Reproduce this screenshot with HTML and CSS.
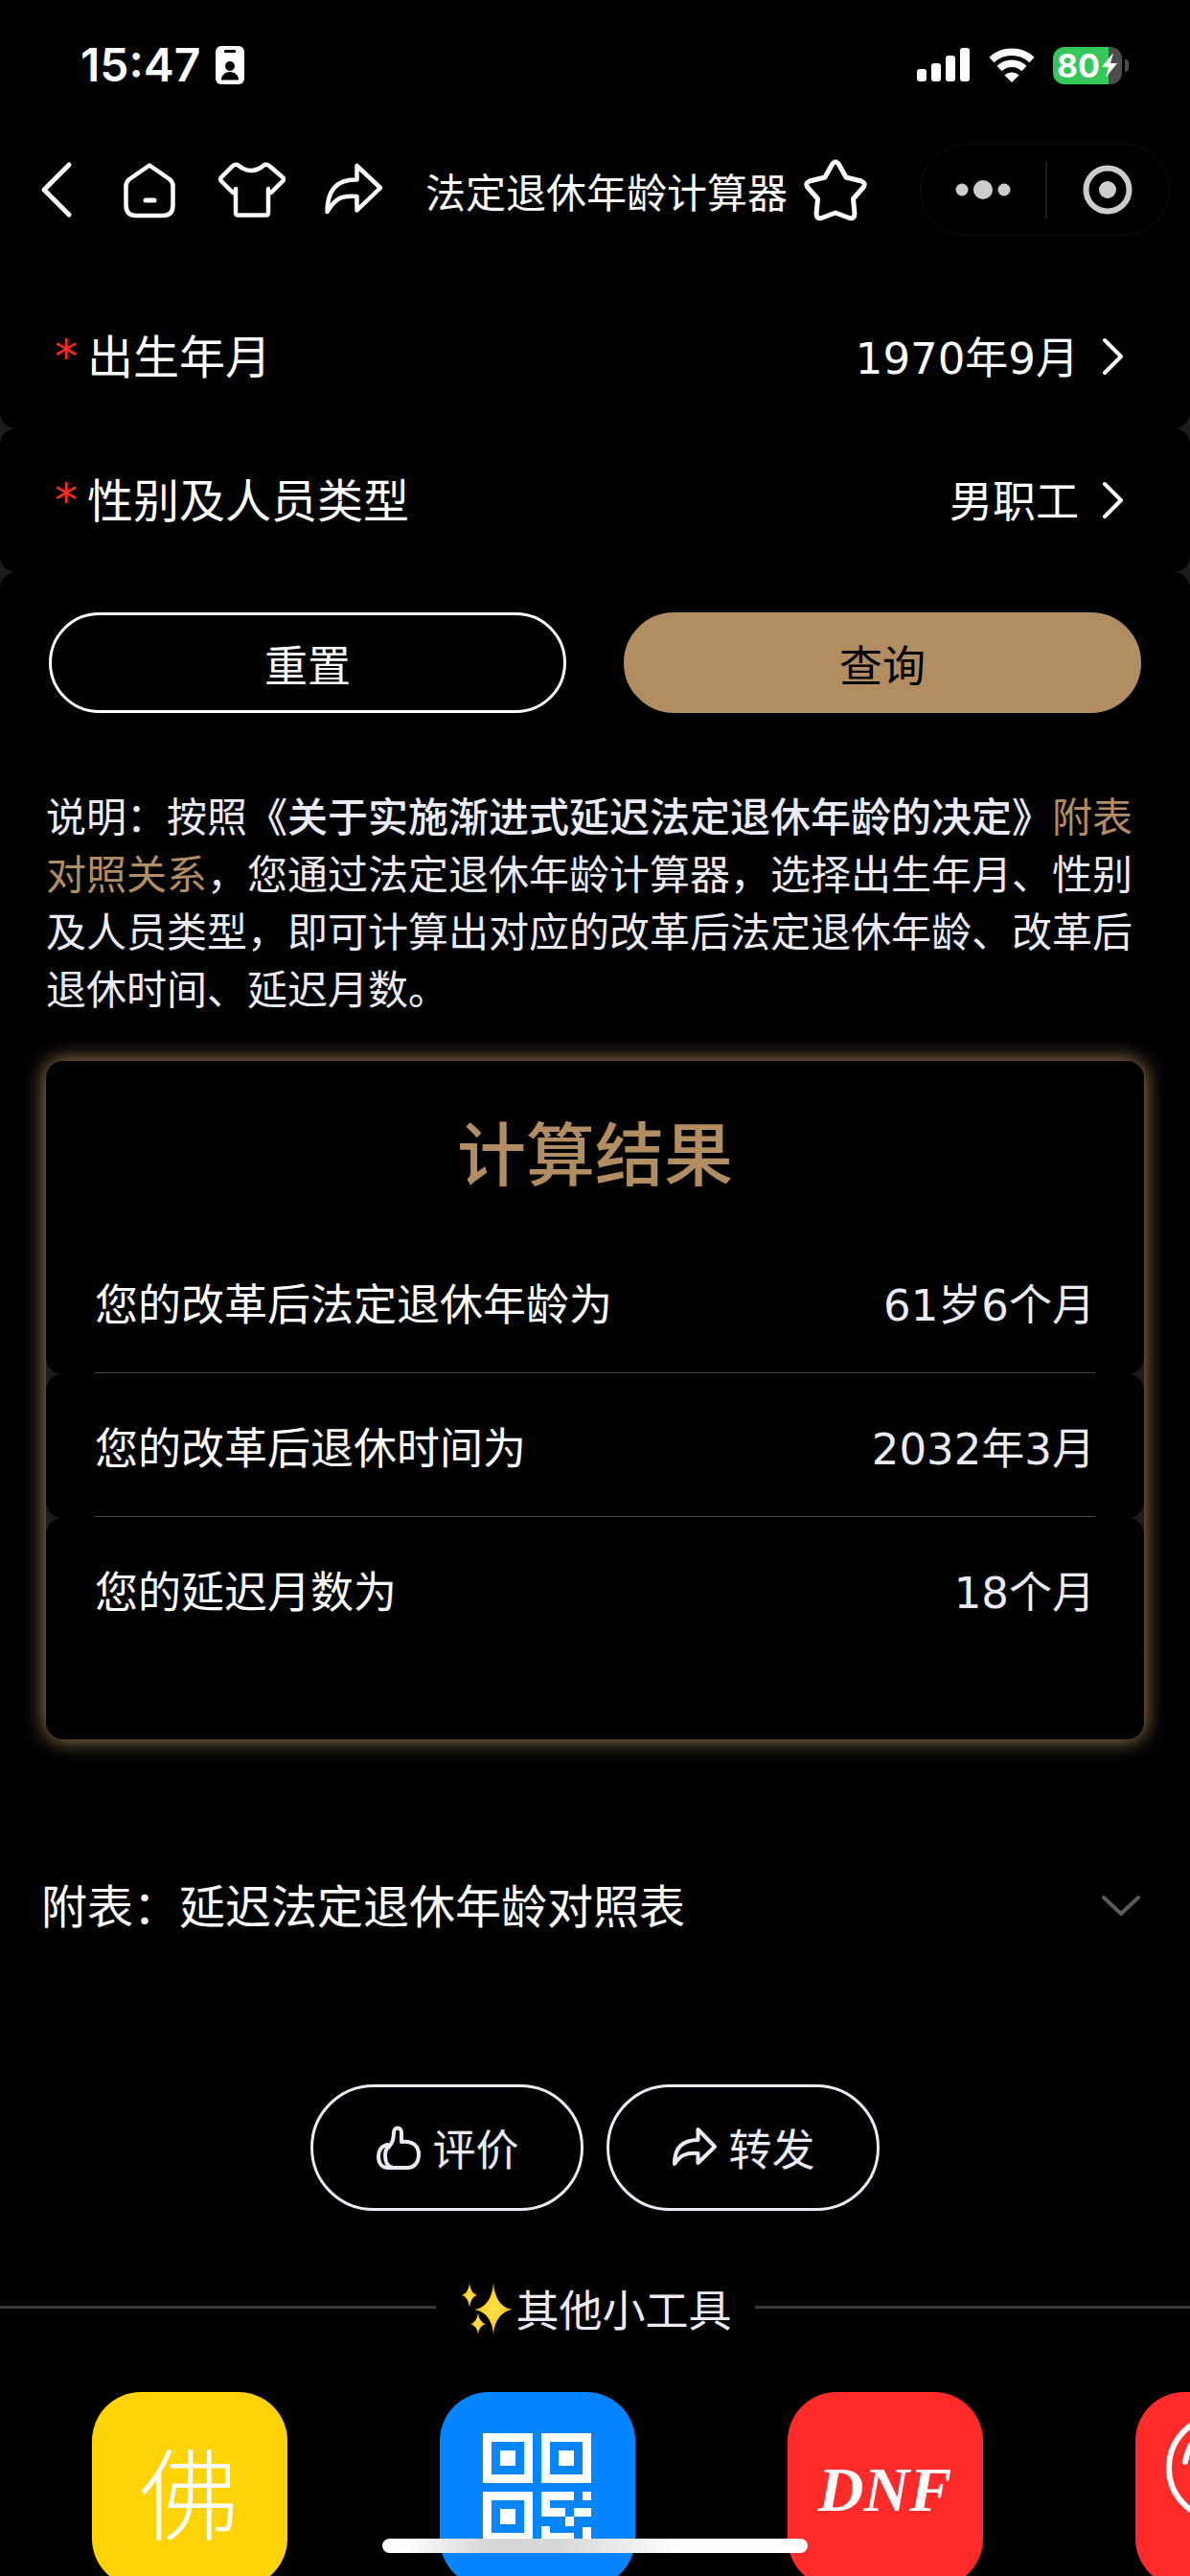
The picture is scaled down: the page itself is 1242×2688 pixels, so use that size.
FILE: index.html
```html
<!DOCTYPE html>
<html lang="zh-CN">
<head>
<meta charset="utf-8">
<meta name="viewport" content="width=device-width, initial-scale=1">
<title>法定退休年龄计算器</title>
<link rel="stylesheet" href="styles.css">
</head>
<body>
<div class="screen">
  <header class="status">
    <div class="status-left">
      <time class="clock">15:47</time>
      <svg width="30" height="40" viewBox="0 0 30 40" aria-hidden="true">
        <rect width="30" height="40" rx="6" fill="#fff"/>
        <rect x="9" y="4" width="12" height="3" rx="1" fill="#000"/>
        <ellipse cx="15" cy="21" rx="5" ry="5" fill="#000"/>
        <path d="M6 35.500c0-5 4-8.500 9-8.500s9 3.500 9 8.500z" fill="#000"/>
      </svg>
    </div>
    <div class="status-right">
      <svg width="56" height="36" viewBox="0 0 56 36" fill="#fff" aria-hidden="true">
        <rect x="0" y="22" width="10" height="13" rx="3"/><rect x="15" y="16" width="10" height="19" rx="3"/>
        <rect x="30" y="8" width="10" height="27" rx="3"/><rect x="45" y="0" width="10" height="35" rx="3"/>
      </svg>
      <svg width="48" height="36" viewBox="0 0 48 36" aria-hidden="true">
        <g fill="none" stroke="#fff" stroke-width="7.500">
          <path d="M3 12.500C14.500 1.500 33.500 1.500 45 12.500"/>
          <path d="M11 21.500C18.500 14.500 29.500 14.500 37 21.500"/>
        </g>
        <path d="M24 36l-7.500-7.500c4-4 11-4 15 0z" fill="#fff"/>
      </svg>
      <div class="battery">
        <span class="battery-body"><span class="battery-num">80</span><svg class="bolt" width="18" height="28" viewBox="0 0 18 28" aria-hidden="true"><path d="M13 1L1 16h7L5 27l12-15h-7z" fill="#fff"/></svg></span>
        <span class="battery-nub"></span>
      </div>
    </div>
  </header>

  <nav class="nav">
    <button class="icon-btn" aria-label="返回"><svg viewBox="0 0 72 72"><path d="M58 10L32 36l26 26" stroke-width="5"/></svg></button>
    <button class="icon-btn" aria-label="首页"><svg viewBox="0 0 72 72"><path d="M36 10.500L57 25q3.500 3 3.500 7v20q0 11-11 11h-27q-11 0-11-11V32q0-4 3.500-7z" stroke-width="4.500"/><path d="M32 47h9" stroke-width="5"/></svg></button>
    <button class="icon-btn" aria-label="装扮"><svg viewBox="0 0 72 72"><path d="M20 35v25q0 2.500 2.500 2.500h29q2.500 0 2.500-2.500V35M20 35v4h-3L5 27q-2-2 0-4l12-12q2-2 5-1 7 6 14 6t14-6q3-1 5 1l14 12q2 2 0 4L57 39h-3" stroke-width="4.500"/></svg></button>
    <button class="icon-btn" aria-label="分享"><svg viewBox="0 0 72 72"><path d="M40.500 11v14.500C18 25 9.500 38 9.500 59 18 45 24 41.500 40.500 43v14.500L65 34z" stroke-width="4.500"/></svg></button>
    <h1 class="nav-title">法定退休年龄计算器</h1>
    <button class="icon-btn" aria-label="收藏"><svg viewBox="0 0 72 72"><path d="M32.500 9.500q3.500-5 7 0l7.500 13.500 16 4q5 2 2.500 6L54.500 45.500l1.500 16q-.5 5.500-5.500 4L36 60l-14.500 5.500q-5 1.500-5.500-4l1.500-16L6.500 33q-2.500-4 2.500-6l16-4z" stroke-width="5"/></svg></button>
    <div class="capsule">
      <button class="capsule-btn" aria-label="更多"><svg width="60" height="60" viewBox="0 0 60 60" fill="#cdcdcd"><circle cx="8" cy="30" r="6.500"/><circle cx="30" cy="30" r="10"/><circle cx="52" cy="30" r="6.500"/></svg></button>
      <button class="capsule-btn" aria-label="关闭"><svg width="60" height="60" viewBox="0 0 60 60"><circle cx="30" cy="30" r="22.500" fill="none" stroke="#cdcdcd" stroke-width="6"/><circle cx="30" cy="30" r="9" fill="#cdcdcd"/></svg></button>
    </div>
  </nav>

  <main>
    <form class="stack form" onsubmit="return false">
      <div class="field">
        <label class="field-label" for="birth"><span class="req">*</span>出生年月</label>
        <button type="button" class="picker" id="birth"><span class="picker-text">1970年9月</span><svg width="24" height="40" viewBox="0 0 24 40"><path d="M3 3l17 17L3 37"/></svg></button>
      </div>
      <div class="field">
        <label class="field-label" for="kind"><span class="req">*</span>性别及人员类型</label>
        <button type="button" class="picker" id="kind"><span class="picker-text">男职工</span><svg width="24" height="40" viewBox="0 0 24 40"><path d="M3 3l17 17L3 37"/></svg></button>
      </div>
      <div class="actions">
        <button type="reset" class="btn">重置</button>
        <button type="submit" class="btn btn-gold">查询</button>
      </div>
    </form>

    <p class="note">说明：按照<strong>《关于实施渐进式延迟法定退休年龄的决定》</strong><a href="#appendix">附表对照关系</a>，您通过法定退休年龄计算器，选择出生年月、性别及人员类型，即可计算出对应的改革后法定退休年龄、改革后退休时间、延迟月数。</p>

    <section class="result">
      <h2 class="result-title">计算结果</h2>
      <dl class="stack result-list">
        <div class="result-row"><dt>您的改革后法定退休年龄为</dt><dd>61岁6个月</dd></div>
        <div class="result-row"><dt>您的改革后退休时间为</dt><dd>2032年3月</dd></div>
        <div class="result-row"><dt>您的延迟月数为</dt><dd>18个月</dd></div>
      </dl>
    </section>

    <button class="appendix" id="appendix" aria-expanded="false">附表：延迟法定退休年龄对照表<svg width="40" height="24" viewBox="0 0 40 24"><path d="M2 3l18 17L38 3"/></svg></button>

    <div class="share">
      <button class="pill"><svg width="48" height="48" viewBox="0 0 48 48"><path d="M15 23c4-4 5-9 5-15 0-6 8-6 8 0v10c12-2 18 5 18 13 0 9-5 14-12 14H20c-7 0-9-7-9-13 0-4 1-7 4-9zM14 21c-7 1-10 6-10 12 0 8 4 12 10 12h8"/></svg>评价</button>
      <button class="pill"><svg width="48" height="48" viewBox="0 0 48 48"><path d="M28.500 5v11C11 16 4 26 4 41c6-9 12-12 24.500-11v10L46 23z"/></svg>转发</button>
    </div>

    <h2 class="more"><span class="more-text"><svg width="54" height="54" viewBox="0 0 54 54" aria-hidden="true"><defs><radialGradient id="gold"><stop offset="0" stop-color="#ffe14a"/><stop offset=".5" stop-color="#ffd62e"/><stop offset="1" stop-color="#f0a01c"/></radialGradient></defs><g fill="url(#gold)"><path d="M33 0q2 25 20 28-18 3-20 26-2-23-20-26 18-3 20-28z"/><path d="M8 0q1 11 8 13-7 2-8 13-1-11-8-13 7-2 8-13z"/><path d="M17 31q1 10 8 12-7 2-8 11-1-9-8-11 7-2 8-12z"/></g></svg>其他小工具</span></h2>

    <div class="tools">
      <a class="tool" href="#"><span class="tile tile-yellow">佛</span></a>
      <a class="tool" href="#" aria-label="二维码"><span class="tile tile-blue"><svg width="204" height="204" viewBox="0 0 204 204"><g fill="none" stroke="#fff" stroke-width="9"><path d="M49.500 47.500h43v43h-43zM110.500 47.500h43v43h-43zM49.500 108.500h43v43h-43z"/></g><path fill="#fff" d="M63 61h16v16H63zM124 61h16v16h-16zM63 122h16v16H63zM106 104h34v9h-34zM106 113h9v8h-9zM106 121h25v9h-25zM131 130h9v10h-9zM140 121h18v9h-18zM149 104h9v9h-9zM106 140h9v17h-9zM115 147h25v10h-25zM149 141h9v16h-9z"/></svg></span></a>
      <a class="tool" href="#"><span class="tile tile-red">DNF</span></a>
      <a class="tool" href="#" aria-label="工具"><span class="tile tile-red"><svg width="204" height="204" viewBox="0 0 204 204" fill="none" stroke="#fff" stroke-width="6" stroke-linecap="round"><circle cx="89" cy="79" r="54"/><path d="M52 73q3-16 13-27"/></svg></span></a>
    </div>
  </main>
  <div class="home-bar"></div>
</div>
</body>
</html>
```

FILE: styles.css
```css
* { box-sizing: border-box; }

body {
  margin: 0;
  background: #000;
  color: #fff;
  font-family: "Noto Sans CJK SC", sans-serif;
  font-size: 45px;
  font-weight: 400;
}

button {
  margin: 0;
  padding: 0;
  border: 0;
  background: none;
  color: inherit;
  font: inherit;
}

a { color: inherit; text-decoration: none; }
svg { display: block; flex: none; }
h1, h2, p, dl, dd { margin: 0; font-weight: 400; }

.screen {
  position: relative;
  height: 100vh;
  overflow: hidden;
}

/* status bar */
.status {
  display: flex;
  justify-content: space-between;
  align-items: center;
  height: 136px;
  padding: 0 64px 0 84px;
}
.status-left { display: flex; align-items: center; gap: 16px; }
.status-right { display: flex; align-items: center; gap: 19px; }
.clock {
  font-family: Inter, sans-serif;
  font-size: 48px;
  line-height: 60px;
  font-weight: 600;
}
.battery { display: flex; align-items: center; gap: 3px; }
.battery-body {
  display: flex;
  align-items: center;
  justify-content: center;
  width: 72px;
  height: 39px;
  border-radius: 12px;
  background: linear-gradient(to right, #34c759 80%, #4d4d4d 80%);
}
.battery-num {
  font-family: Inter, sans-serif;
  font-size: 34px;
  line-height: 39px;
  font-weight: 700;
}
.bolt { margin-left: 1px; }
.battery-nub {
  width: 4px;
  height: 13px;
  border-radius: 0 4px 4px 0;
  background: #4d4d4d;
}

/* navigation */
.nav {
  display: flex;
  align-items: center;
  height: 124px;
  padding: 0 21px 0 14px;
}
.icon-btn { flex: none; width: 72px; height: 72px; }
.icon-btn + .icon-btn { margin-left: 34px; }
.icon-btn svg,
.picker svg,
.appendix svg,
.pill svg {
  fill: none;
  stroke: currentColor;
  stroke-linecap: round;
  stroke-linejoin: round;
}
.nav-title {
  margin: 0 14px 0 40px;
  padding-top: 2px;
  font-size: 42px;
  line-height: 60px;
  white-space: nowrap;
}
.capsule {
  display: flex;
  width: 261px;
  height: 96px;
  margin-left: auto;
  border: 1px solid #0e0e0e;
  border-radius: 48px;
}
.capsule-btn {
  display: flex;
  flex: 1;
  align-items: center;
  justify-content: center;
}
.capsule-btn + .capsule-btn::before {
  content: "";
  width: 2px;
  height: 60px;
  margin-right: auto;
  background: #1c1c1c;
}
.capsule-btn + .capsule-btn svg { margin-right: auto; }

/* rounded black rows on a dark grey ground */
.stack {
  border-radius: 17px;
  background: #1c1c1e;
}
.stack > * {
  border-radius: 17px;
  background: #000;
}

.field-label,
.note,
.result-title,
.appendix {
  font-family: "Noto Sans", "Noto Sans CJK SC", sans-serif;
}

.form { margin-top: 37px; }
.field {
  display: flex;
  align-items: center;
  justify-content: space-between;
  height: 150px;
  padding: 0 68px 0 57px;
}
.field-label {
  display: flex;
  font-size: 48px;
  line-height: 72px;
}
.req {
  width: 34px;
  color: #fa2a1e;
  font-family: "DejaVu Sans", sans-serif;
}
.picker {
  display: flex;
  align-items: center;
  gap: 24px;
  font-family: "DejaVu Sans", "Noto Sans CJK SC", sans-serif;
  line-height: 72px;
}
.picker-text { padding-top: 6px; }
.picker svg { stroke-width: 4px; }

.actions { display: flex; gap: 60px; padding: 42px 51px 45px; }
.btn {
  flex: 1;
  height: 105px;
  padding-top: 2px;
  border: 3px solid #fff;
  border-radius: 53px;
  line-height: 72px;
}
.btn-gold { border-color: #b38d62; background: #b38d62; color: #000; }

.note {
  margin: 33px 48px 0;
  color: #ebebf5;
  font-size: 42px;
  line-height: 60px;
}
.note strong { font-weight: 500; }
.note a { color: #b38d62; }

/* result card */
.result {
  margin: 45px 48px 0;
  padding: 48px 0 81px;
  border-radius: 18px;
  background: #000;
  box-shadow: 0 0 22px #b38d62;
}
.result-title {
  margin-bottom: 33px;
  color: #b38d62;
  font-size: 72px;
  font-weight: 500;
  line-height: 96px;
  text-align: center;
}
.result-row {
  position: relative;
  display: flex;
  align-items: baseline;
  justify-content: space-between;
  height: 150px;
  padding: 39px 51px 0;
  line-height: 72px;
}
.result-row + .result-row::before {
  content: "";
  position: absolute;
  top: -2px;
  left: 51px;
  right: 51px;
  height: 1px;
  background: #48484a;
}
.result-row dd {
  color: #ebebf5;
  font-family: "DejaVu Sans", "Noto Sans CJK SC", sans-serif;
}

.appendix {
  display: flex;
  align-items: center;
  justify-content: space-between;
  width: 100%;
  height: 150px;
  margin-top: 99px;
  padding: 0 52px 0 43px;
  font-size: 48px;
  line-height: 72px;
}
.appendix svg { color: #5a5a5a; stroke-width: 4px; }

.share {
  display: flex;
  justify-content: center;
  gap: 24px;
  margin-top: 111px;
  color: #ebebf5;
}
.pill {
  display: flex;
  align-items: center;
  justify-content: center;
  gap: 12px;
  width: 285px;
  height: 132px;
  border: 3px solid #ebebf5;
  border-radius: 66px;
  line-height: 72px;
}
.pill svg { stroke-width: 4px; }

.more {
  display: flex;
  align-items: center;
  gap: 24px;
  margin-top: 62px;
  color: #ebebf5;
  font-size: 45px;
  line-height: 72px;
}
.more::before,
.more::after {
  content: "";
  flex: 1;
  height: 3px;
  background: #3a3a3c;
}
.more-text {
  display: flex;
  align-items: center;
  gap: 3px;
  padding: 4px 0 0 3px;
}

.tools { display: flex; margin-top: 51px; padding: 0 16px; }
.tool {
  display: flex;
  flex: none;
  justify-content: center;
  width: 363px;
}
.tile {
  display: flex;
  align-items: center;
  justify-content: center;
  width: 204px;
  height: 204px;
  border-radius: 51px;
}
.tile-yellow { background: #ffd306; font-size: 104px; font-weight: 300; line-height: 204px; }
.tile-blue { background: #0586ff; }
.tile-red {
  background: #ff2a2a;
  font-family: "Liberation Serif", serif;
  font-size: 66px;
  font-style: italic;
  font-weight: 700;
  line-height: 72px;
}

.home-bar {
  position: absolute;
  left: 50%;
  bottom: 24px;
  width: 444px;
  height: 15px;
  margin-left: -222px;
  border-radius: 8px;
  background: linear-gradient(to right, #fff 5%, #d8d8d8 24%, #d8d8d8 42%, #fff 70%);
}
```
